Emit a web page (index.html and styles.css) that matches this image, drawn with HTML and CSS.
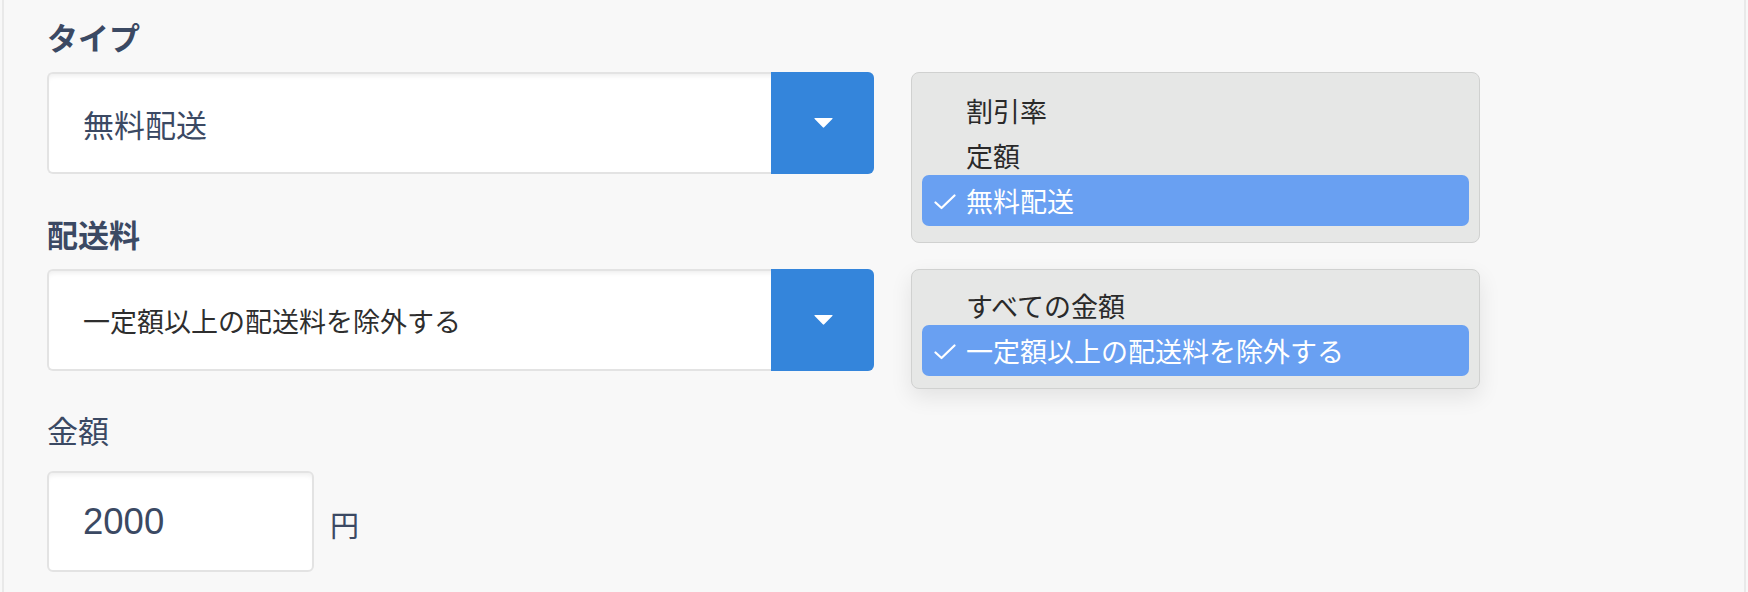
FILE: index.html
```html
<!DOCTYPE html>
<html lang="ja">
<head>
<meta charset="utf-8">
<title>配送設定</title>
<link rel="stylesheet" href="styles.css">
</head>
<body>
<div class="frame">
  <div class="label label--bold label--first">タイプ</div>
  <div class="select select--large">
    <div class="select-value">無料配送</div>
    <div class="select-btn">
      <svg width="19" height="10" viewBox="0 0 19 10"><path d="M1 0H18Q19.2 0 18.3 0.9L10.2 9.3Q9.5 10 8.8 9.3L0.7 0.9Q-0.2 0 1 0Z" fill="#fff"/></svg>
    </div>
    <ul class="menu menu--a">
      <li class="menu-item">割引率</li>
      <li class="menu-item">定額</li>
      <li class="menu-item menu-item--selected">
        <svg class="check" width="22" height="16" viewBox="0 0 22 16"><polyline points="1.5,8.5 7.5,14 20.5,1.5" fill="none" stroke="#fff" stroke-width="2.2" stroke-linecap="round" stroke-linejoin="round"/></svg>
        無料配送
      </li>
    </ul>
  </div>

  <div class="label label--bold label--next">配送料</div>
  <div class="select select--small">
    <div class="select-value">一定額以上の配送料を除外する</div>
    <div class="select-btn">
      <svg width="19" height="10" viewBox="0 0 19 10"><path d="M1 0H18Q19.2 0 18.3 0.9L10.2 9.3Q9.5 10 8.8 9.3L0.7 0.9Q-0.2 0 1 0Z" fill="#fff"/></svg>
    </div>
    <ul class="menu menu--b">
      <li class="menu-item">すべての金額</li>
      <li class="menu-item menu-item--selected">
        <svg class="check" width="22" height="16" viewBox="0 0 22 16"><polyline points="1.5,8.5 7.5,14 20.5,1.5" fill="none" stroke="#fff" stroke-width="2.2" stroke-linecap="round" stroke-linejoin="round"/></svg>
        一定額以上の配送料を除外する
      </li>
    </ul>
  </div>

  <div class="label label--amount">金額</div>
  <div class="amount-row">
    <div class="amount-input">2000</div>
    <div class="unit">円</div>
  </div>
</div>
</body>
</html>
```
FILE: styles.css
```css
html, body {
  margin: 0;
  padding: 0;
  background: #f8f8f8;
}

body {
  font-family: "Noto Sans CJK JP", "Noto Sans", sans-serif;
  width: 1748px;
  height: 592px;
  overflow: hidden;
}

.frame {
  box-sizing: border-box;
  margin-left: 2px;
  width: 1744px;
  height: 592px;
  border-left: 2px solid #e9e9e9;
  border-right: 2px solid #e9e9e9;
  background: #f8f8f8;
  padding: 19px 0 0 43px;
}

.label {
  font-size: 31px;
  line-height: 35px;
  color: #3b4963;
  margin-bottom: 18px;
}

.label--bold {
  font-weight: 700;
}

.label--next {
  margin-top: 42px;
}

.label--amount {
  margin-top: 41px;
  margin-bottom: 24px;
}

.select {
  position: relative;
  box-sizing: border-box;
  width: 827px;
  height: 102px;
  display: flex;
  align-items: stretch;
  background: #fff;
  border: 2px solid #e3e3e3;
  border-right: none;
  border-radius: 6px;
  box-shadow: inset 0 5px 5px -3px rgba(0, 0, 0, 0.07);
}

.select-value {
  flex: 1;
  display: flex;
  align-items: center;
  padding-left: 34px;
  white-space: nowrap;
}

.select--large .select-value {
  font-size: 31px;
  color: #3b4963;
}

.select--small .select-value {
  font-size: 27px;
  color: #2e2e2e;
  padding-top: 1px;
}

.select-btn {
  width: 103px;
  margin: -2px 0;
  background: #3485db;
  border-radius: 0 6px 6px 0;
  display: flex;
  align-items: center;
  justify-content: center;
}

.select-btn svg {
  display: block;
  margin-left: 1px;
}

.menu {
  position: absolute;
  top: -2px;
  left: calc(100% + 37px);
  box-sizing: border-box;
  width: 569px;
  margin: 0;
  list-style: none;
  background: #e6e7e6;
  border: 1px solid #d0d1d0;
  border-radius: 8px;
  padding-left: 10px;
  padding-right: 10px;
}

.menu--a {
  padding-top: 15px;
  padding-bottom: 19px;
}

.menu--b {
  padding-top: 13px;
  padding-bottom: 15px;
  box-shadow: 0 8px 22px rgba(0, 0, 0, 0.09);
}

.menu-item {
  position: relative;
  height: 45px;
  line-height: 45px;
  padding-left: 44px;
  font-size: 27px;
  color: #2a2a2a;
  white-space: nowrap;
}

.menu-item--selected {
  height: 51px;
  line-height: 51px;
  margin: -3px 0;
  background: #69a0f2;
  border-radius: 7px;
  color: #fff;
}

.check {
  position: absolute;
  left: 12px;
  top: 19px;
}

.amount-row {
  display: flex;
  align-items: center;
  gap: 16px;
}

.amount-input {
  box-sizing: border-box;
  width: 267px;
  height: 101px;
  background: #fff;
  border: 2px solid #e3e3e3;
  border-radius: 6px;
  box-shadow: inset 0 5px 5px -3px rgba(0, 0, 0, 0.07);
  padding-left: 34px;
  display: flex;
  align-items: center;
  font-family: "Liberation Sans", Arial, sans-serif;
  font-size: 36.5px;
  color: #3b4963;
}

.unit {
  font-size: 29px;
  color: #3b4963;
  padding-top: 5px;
}
```
